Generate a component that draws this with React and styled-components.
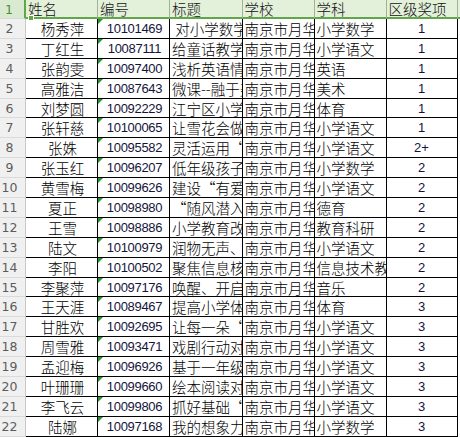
import React from "react"
import styled, { createGlobalStyle, css } from "styled-components"

const rows = [
    ["杨秀萍", "10101469", " 对小学数学教学的思考", "南京市月华路小学", "小学数学", "1"],
    ["丁红生", "10087111", "给童话教学插上翅膀", "南京市月华路小学", "小学语文", "1"],
    ["张韵雯", "10097400", "浅析英语情境教学", "南京市月华路小学", "英语", "1"],
    ["高雅洁", "10087643", "微课--融于美术课堂", "南京市月华路小学", "美术", "1"],
    ["刘梦圆", "10092229", "江宁区小学体育现状", "南京市月华路小学", "体育", "1"],
    ["张轩慈", "10100065", "让雪花会做梦", "南京市月华路小学", "小学语文", "1"],
    ["张姝", "10095582", "灵活运用“读写结合”", "南京市月华路小学", "小学语文", "2+"],
    ["张玉红", "10096207", "低年级孩子数学习惯", "南京市月华路小学", "小学数学", "2"],
    ["黄雪梅", "10099626", "建设“有爱的”班级", "南京市月华路小学", "小学语文", "2"],
    ["夏正", "10098980", "“随风潜入夜”德育", "南京市月华路小学", "德育", "2"],
    ["王雪", "10098886", "小学教育改革探究", "南京市月华路小学", "教育科研", "2"],
    ["陆文", "10100979", "润物无声、细节育人", "南京市月华路小学", "小学语文", "2"],
    ["李阳", "10100502", "聚焦信息核心素养", "南京市月华路小学", "信息技术教育", "2"],
    ["李聚萍", "10097176", "唤醒、开启音乐之门", "南京市月华路小学", "音乐", "2"],
    ["王天涯", "10089467", "提高小学体育课效率", "南京市月华路小学", "体育", "3"],
    ["甘胜欢", "10092695", "让每一朵“花”开放", "南京市月华路小学", "小学语文", "3"],
    ["周雪雅", "10093471", "戏剧行动对语文教学", "南京市月华路小学", "小学语文", "3"],
    ["孟迎梅", "10096926", "基于一年级识字教学", "南京市月华路小学", "小学语文", "3"],
    ["叶珊珊", "10099660", "绘本阅读对低年级", "南京市月华路小学", "小学语文", "3"],
    ["李飞云", "10099806", "抓好基础“写字”教学", "南京市月华路小学", "小学语文", "3"],
    ["陆娜", "10097168", "我的想象力课堂", "南京市月华路小学", "小学数学", "3"]
]

const headers = ["姓名", "编号", "标题", "学校", "学科", "区级奖项"]

export default function App() {
    return (
        <>
            <GlobalStyle />
            <SheetView>
                <RowHead $active>1</RowHead>
                { headers.map((h, i) => (
                    <HeadCell key={ h } $first={ i === 0 }>{ h }</HeadCell>
                )) }
                <HeadCell $rest />
                <FillHandle />

                { rows.map((row, r) => (
                    <React.Fragment key={ r }>
                        <RowHead>{ r + 2 }</RowHead>
                        <Cell $align="center">{ row[0] }</Cell>
                        <NumberCell>{ row[1] }</NumberCell>
                        <Cell>{ row[2] }</Cell>
                        <Cell>{ row[3] }</Cell>
                        <Cell>{ row[4] }</Cell>
                        <AwardCell>{ row[5] }</AwardCell>
                        <EmptyCell />
                    </React.Fragment>
                )) }
            </SheetView>
        </>
    )
}

const GlobalStyle = createGlobalStyle`
    html, body {
        margin: 0;
        padding: 0;
        background: #ffffff;
        overflow: hidden;
    }
    body {
        font-family: "Noto Sans CJK SC", "Noto Sans", sans-serif;
    }
`

const SheetView = styled.div`
    position: relative;
    display: grid;
    grid-template-columns: 26px 72px 72px 72.5px 72px 72px 71px 1fr;
    grid-template-rows: 19px repeat(21, 19.9px);
    width: 460px;
    height: 437px;
    overflow: hidden;
`

const RowHead = styled.div`
    box-sizing: border-box;
    display: flex;
    align-items: center;
    justify-content: center;
    padding-right: 6px;
    background: #f0f0f0;
    border-right: 1px solid #c8c8c8;
    border-bottom: 1px solid #dadada;
    font-family: "DejaVu Sans", sans-serif;
    font-size: 12.5px;
    color: #5c5c5c;
    ${ p => p.$active && css`
        background: #d9ead0;
        color: #4c8a3a;
        border-right: 2px solid #62a64a;
    ` }
`

const HeadCell = styled.div`
    box-sizing: border-box;
    display: flex;
    align-items: center;
    padding-left: 2px;
    padding-bottom: 1px;
    background: #e3f0da;
    border-right: 1px solid #9fb396;
    border-bottom: 2px solid #62a64a;
    font-size: 14.5px;
    font-weight: 300;
    color: #111;
    white-space: nowrap;
    overflow: hidden;
    ${ p => p.$rest && css`
        border-right: none;
    ` }
`

const FillHandle = styled.div`
    position: absolute;
    left: 28px;
    top: 15px;
    width: 4px;
    height: 4px;
    background: #62a64a;
    border: 1px solid #ffffff;
`

const Cell = styled.div`
    box-sizing: border-box;
    position: relative;
    display: flex;
    align-items: center;
    justify-content: ${ p => p.$align === "center" ? "center" : "flex-start" };
    padding-left: 2px;
    border-right: 1px solid #000;
    border-bottom: 1px solid #000;
    font-size: 14.5px;
    font-weight: 300;
    color: #000;
    white-space: pre;
    overflow: hidden;
`

const NumberCell = styled(Cell)`
    justify-content: center;
    padding-left: 2px;
    font-family: "Liberation Sans", "DejaVu Sans", sans-serif;
    font-size: 13px;
    font-weight: 400;
    letter-spacing: -0.3px;
    color: #14143a;
    &::before {
        content: "";
        position: absolute;
        left: 0;
        top: 0;
        border-top: 5px solid #1f9a2a;
        border-right: 5px solid transparent;
    }
`

const AwardCell = styled(Cell)`
    justify-content: center;
    padding-left: 0;
    font-family: "Liberation Sans", "DejaVu Sans", sans-serif;
    font-size: 13px;
    font-weight: 400;
    color: #14143a;
`

const EmptyCell = styled.div`
    background: #ffffff;
`
